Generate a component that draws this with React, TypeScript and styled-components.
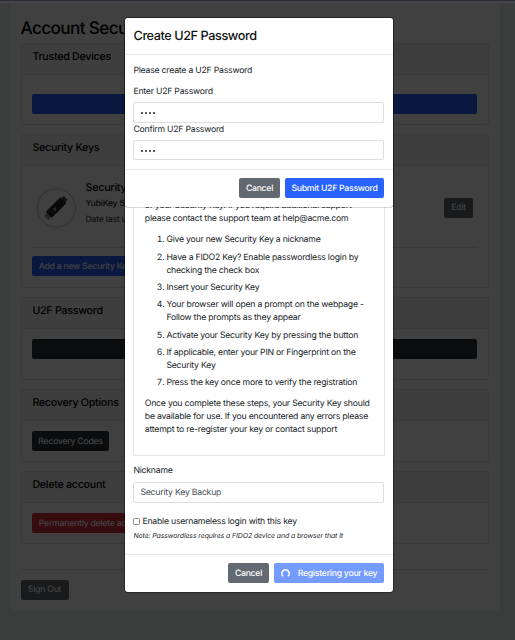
import React from "react";
import styled, { createGlobalStyle } from "styled-components";

const Global = createGlobalStyle`
  * { box-sizing: border-box; }
  html, body { margin: 0; height: 640px; overflow: hidden; background: #ebf2ef; }
  body, button, input { font-family: Inter, "Liberation Sans", sans-serif; font-size: 8.7px; color: #212529; letter-spacing: -0.225px; text-rendering: geometricPrecision; }
  p, h1, h2, ol { margin: 0; padding: 0; font-weight: 400; }
`;

const Page = styled.div`
  position: relative;
  width: 515px;
  height: 640px;
  overflow: hidden;
  padding: 3px 15.5px 0 10.4px;
  background: #ebf2ef;
`;
const Panel = styled.main`
  height: 608px;
  padding: 14px 10.8px 0 10.2px;
  background: #fff;
`;
const PageTitle = styled.h1`
  width: 103.5px;
  overflow: hidden;
  height: 26px;
  line-height: 24.6px;
  font-size: 17.2px;
  font-weight: 500;
  letter-spacing: -0.65px;
  white-space: nowrap;
  color: #000;
`;
const Card = styled.section<{ $h: number }>`
  height: ${(p) => p.$h}px;
  margin-bottom: 9px;
  border: 1px solid #e6e6e6;
  border-radius: 2px;
  background: #fff;
`;
const CardHeader = styled.h2`
  height: 31px;
  padding: 0 10.8px;
  line-height: 26.8px;
  font-size: 10.7px;
  font-weight: 500;
  letter-spacing: -0.28px;
  color: #000;
  background: #f7f7f7;
  border-bottom: 1px solid #e6e6e6;
`;
const CardBody = styled.div<{ $top: number }>`
  padding: ${(p) => p.$top}px 10.5px 0;
`;
const tones = {
  primary: "#2962ff",
  dark: "#2f3337",
  danger: "#d7303a",
  secondary: "#626970",
  busy: "#749bff",
};
const Button = styled.button<{ $tone: keyof typeof tones; $w: string }>`
  display: flex;
  align-items: center;
  justify-content: center;
  flex: none;
  width: ${(p) => p.$w};
  height: 20px;
  padding: 1px 0 0;
  border: 0;
  border-radius: 2px;
  color: #fff;
  font-weight: 500;
  letter-spacing: -0.27px;
  white-space: nowrap;
  background: ${(p) => tones[p.$tone]};
`;
const KeyRow = styled.div`
  display: flex;
  align-items: center;
  height: 77.5px;
  padding: 0 4px;
`;
const KeyText = styled.div`
  flex: 1;
  margin-left: 9.4px;
  padding-bottom: 8px;
  line-height: 16px;
`;
const KeyName = styled.p`
  font-size: 10.7px;
  font-weight: 500;
  color: #000;
`;
const KeyModel = styled.p`
  color: #000;
`;
const KeyDate = styled.p`
  color: #333;
`;
const Rule = styled.div<{ $mt?: number; $mb: number }>`
  height: 1px;
  margin-top: ${(p) => p.$mt ?? 0}px;
  margin-bottom: ${(p) => p.$mb}px;
  background: #e2e2e2;
`;
const Backdrop = styled.div`
  position: absolute;
  inset: 0;
  background: rgba(0, 0, 0, 0.75);
`;
const TopEdge = styled.div`
  position: absolute;
  inset: 0 0 auto 0;
  height: 3px;
  background: #454547;
  border-top: 1px solid #2a2930;
`;
const Dialog = styled.div<{ $h: number }>`
  position: absolute;
  left: 125px;
  top: 17.5px;
  width: 268px;
  height: ${(p) => p.$h}px;
  display: flex;
  flex-direction: column;
  background: #fff;
  border-radius: 3px;
  box-shadow: 0 0 0 1px rgba(0, 0, 0, 0.35);
`;
const UpperDialog = styled(Dialog)`
  box-shadow: 0 0 0 0.6px rgba(0, 0, 0, 0.3);
`;
const DialogHeader = styled.h2`
  height: 37px;
  padding: 0 8.5px;
  line-height: 38px;
  font-size: 12.7px;
  font-weight: 500;
  letter-spacing: -0.43px;
  color: #111;
  border-bottom: 1px solid #e6e8ea;
`;
const DialogBody = styled.div`
  flex: 1;
  padding: 0 8.4px;
`;
const DialogFooter = styled.div`
  display: flex;
  align-items: center;
  justify-content: flex-end;
  gap: 5px;
  height: 38px;
  padding: 0 9px 1px 8px;
  border-top: 1px solid #e6e8ea;
`;
const Line = styled.p<{ $h: number; $pt?: number; $pb?: number }>`
  height: ${(p) => p.$h + (p.$pt ?? 0) + (p.$pb ?? 0)}px;
  padding: ${(p) => p.$pt ?? 0}px 0 ${(p) => p.$pb ?? 0}px;
  line-height: ${(p) => p.$h}px;
  white-space: nowrap;
`;
const Field = styled.input`
  display: block;
  width: 251px;
  height: 20.5px;
  padding: 1px 6px 0;
  border: 1px solid #dbdfe3;
  border-radius: 2px;
  background: #fff;
  color: #495057;
  outline: 0;
`;
const Dots = styled.div`
  display: flex;
  align-items: center;
  gap: 2.1px;
  width: 251px;
  height: 20.5px;
  padding: 2px 6.6px 0;
  border: 1px solid #dbdfe3;
  border-radius: 2px;
`;
const Dot = styled.i`
  width: 2px;
  height: 2px;
  border-radius: 50%;
  background: #222;
`;
const Instructions = styled.div`
  height: 272px;
  margin-top: 129.5px;
  padding: 15.8px 10.4px 0;
  border: 1px solid #e4e6e8;
  border-top: 0;
  border-radius: 2px;
  line-height: 13px;
  white-space: nowrap;
`;
const Steps = styled.ol`
  margin: 8.6px 0 8.2px;
  padding-left: 21.6px;
  li { margin-bottom: 4.3px; }
`;
const CheckRow = styled.label`
  display: flex;
  align-items: center;
  gap: 2px;
  height: 13px;
  margin-top: 13px;
`;
const Check = styled.i`
  width: 7px;
  height: 7px;
  margin-top: -1px;
  border: 1px solid #888;
  border-radius: 1.5px;
`;
const Note = styled.p`
  line-height: 14px;
  font-size: 6.9px;
  font-style: italic;
  letter-spacing: -0.08px;
`;
const Spinner = styled.svg`
  width: 9px;
  height: 9px;
  margin-right: 8px;
`;

const Password = () => (
  <Dots>
    <Dot /><Dot /><Dot /><Dot />
  </Dots>
);

const KeyIcon = () => (
  <svg width="40" height="40" viewBox="0 0 40 40">
    <circle cx="20.4" cy="20" r="19.2" fill="none" stroke="#d4d4d4" strokeWidth="1.3" />
    <g transform="rotate(-45 20 20)">
      <rect x="6" y="17" width="6" height="6" fill="#999" />
      <rect x="29" y="17" width="5" height="5.5" fill="#555" />
      <rect x="10" y="15.5" width="21" height="8.5" rx="1.5" fill="#242424" />
      <circle cx="18.5" cy="20" r="1.6" fill="#a09b88" />
    </g>
  </svg>
);

export default function App() {
  return (
    <>
      <Global />
      <Page>
        <Panel>
          <PageTitle>Account Security</PageTitle>
          <Card $h={82}>
            <CardHeader>Trusted Devices</CardHeader>
            <CardBody $top={19}><Button $tone="primary" $w="100%" /></CardBody>
          </Card>
          <Card $h={153.5}>
            <CardHeader>Security Keys</CardHeader>
            <CardBody $top={3}>
              <KeyRow>
                <KeyIcon />
                <KeyText>
                  <KeyName>Security Key</KeyName>
                  <KeyModel>YubiKey 5C</KeyModel>
                  <KeyDate>Date last used</KeyDate>
                </KeyText>
                <Button $tone="secondary" $w="29px">Edit</Button>
              </KeyRow>
              <Rule $mb={8.5} />
              <Button $tone="primary" $w="106px">Add a new Security Key</Button>
            </CardBody>
          </Card>
          <Card $h={83.5}>
            <CardHeader>U2F Password</CardHeader>
            <CardBody $top={10.5}><Button $tone="dark" $w="100%" /></CardBody>
          </Card>
          <Card $h={73.2}>
            <CardHeader>Recovery Options</CardHeader>
            <CardBody $top={10}><Button $tone="dark" $w="77px">Recovery Codes</Button></CardBody>
          </Card>
          <Card $h={73.2}>
            <CardHeader>Delete account</CardHeader>
            <CardBody $top={10}><Button $tone="danger" $w="123px">Permanently delete account</Button></CardBody>
          </Card>
          <Rule $mt={25} $mb={9.2} />
          <Button $tone="secondary" $w="48px">Sign Out</Button>
        </Panel>
        <Backdrop />
        <TopEdge />
        <Dialog $h={574.5}>
          <DialogHeader />
          <DialogBody>
            <Instructions>
              <p>of your Security Key. If you require additional support<br />please contact the support team at help@acme.com</p>
              <Steps>
                <li>Give your new Security Key a nickname</li>
                <li>Have a FIDO2 Key? Enable passwordless login by<br />checking the check box</li>
                <li>Insert your Security Key</li>
                <li>Your browser will open a prompt on the webpage -<br />Follow the prompts as they appear</li>
                <li>Activate your Security Key by pressing the button</li>
                <li>If applicable, enter your PIN or Fingerprint on the<br />Security Key</li>
                <li>Press the key once more to verify the registration</li>
              </Steps>
              <p>Once you complete these steps, your Security Key should<br />be available for use. If you encountered any errors please<br />attempt to re-register your key or contact support</p>
            </Instructions>
            <Line $h={21} $pt={5}>Nickname</Line>
            <Field defaultValue="Security Key Backup" />
            <CheckRow><Check />Enable usernameless login with this key</CheckRow>
            <Note>Note: Passwordless requires a FIDO2 device and a browser that it</Note>
          </DialogBody>
          <DialogFooter>
            <Button $tone="secondary" $w="41px">Cancel</Button>
            <Button $tone="busy" $w="110px">
              <Spinner viewBox="0 0 9 9"><path d="M2.1 7.3A3.7 3.7 0 1 1 6.9 7.3" fill="none" stroke="#fff" strokeWidth="1.5" /></Spinner>
              Registering your key
            </Button>
          </DialogFooter>
        </Dialog>
        <UpperDialog $h={189.5}>
          <DialogHeader>Create U2F Password</DialogHeader>
          <DialogBody>
            <Line $h={30} $pt={1}>Please create a U2F Password</Line>
            <Line $h={13.5} $pb={3}>Enter U2F Password</Line>
            <Password />
            <Line $h={14} $pb={3}>Confirm U2F Password</Line>
            <Password />
          </DialogBody>
          <DialogFooter>
            <Button $tone="secondary" $w="41px">Cancel</Button>
            <Button $tone="primary" $w="99px">Submit U2F Password</Button>
          </DialogFooter>
        </UpperDialog>
      </Page>
    </>
  );
}
